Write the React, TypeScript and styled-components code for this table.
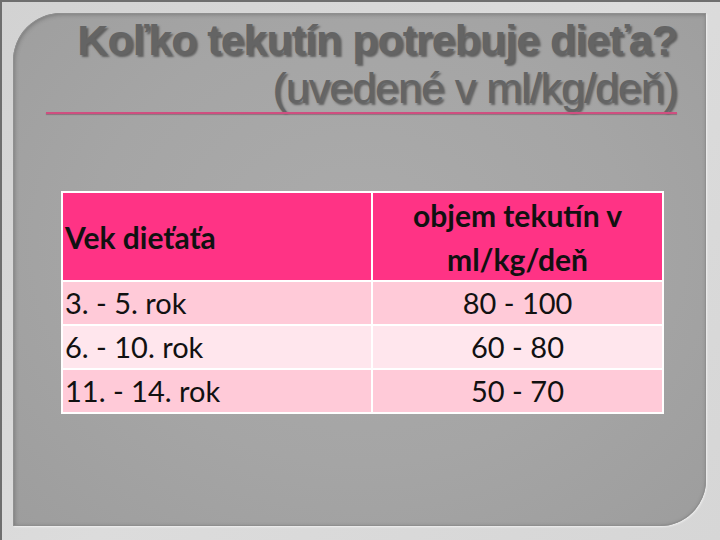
import React from "react";
import styled, { createGlobalStyle } from "styled-components";

const Global = createGlobalStyle`
  html, body { margin: 0; padding: 0; }
  body { width: 720px; height: 540px; overflow: hidden; }
`;

const Frame = styled.div`
  width: 720px;
  height: 540px;
  box-sizing: border-box;
  padding: 11px 14px 14px 11px;
  background: linear-gradient(135deg, #d2d2d2 0%, #dcdcdc 50%, #d6d6d6 100%);
  border-top: 2px solid #6e6e6e;
  border-left: 2px solid #6e6e6e;
`;

const Panel = styled.div`
  width: 100%;
  height: 100%;
  box-sizing: border-box;
  border-radius: 48px 0 46px 0;
  background: radial-gradient(ellipse at 50% 45%, #ababab 0%, #a5a5a5 55%, #9d9d9d 100%);
  box-shadow: inset 0 0 0 1px #8f8f8f, inset 1px 1px 5px rgba(0, 0, 0, 0.3),
    1px 1px 2px rgba(255, 255, 255, 0.6);
  display: flex;
  flex-direction: column;
`;

const Title = styled.h1`
  margin: 3px 0 0 0;
  padding: 0 29px 0 0;
  text-align: right;
  font-family: "Liberation Sans", Arial, sans-serif;
  font-size: 43px;
  line-height: 48px;
  letter-spacing: -1px;
  color: #646464;
  text-shadow: 2px 2px 2px rgba(50, 50, 50, 0.6);
`;

const TitleLine = styled.div<{ $bold?: boolean }>`
  font-weight: ${(p) => (p.$bold ? 700 : 400)};
`;

const Rule = styled.div`
  height: 2px;
  margin: 0 29px 0 33px;
  background: #cf4f80;
  box-shadow: 0 1px 1px rgba(80, 30, 50, 0.35);
`;

const Table = styled.div`
  margin: 77px 0 0 48px;
  width: 603px;
  box-sizing: border-box;
  display: grid;
  grid-template-columns: 308px 289px;
  grid-template-rows: 87px 42px 42px 42px;
  gap: 2px;
  padding: 2px;
  background: #ffffff;
  font-family: Lato, "Open Sans", sans-serif;
  color: #111;
`;

const Cell = styled.div<{ $tone: "head" | "odd" | "even"; $center?: boolean }>`
  background: ${(p) =>
    p.$tone === "head" ? "#ff3385" : p.$tone === "odd" ? "#ffcad8" : "#ffe6ed"};
  font-weight: ${(p) => (p.$tone === "head" ? 700 : 400)};
  font-size: ${(p) => (p.$tone === "head" ? 30 : 29)}px;
  display: flex;
  flex-direction: column;
  justify-content: center;
  align-items: ${(p) => (p.$center ? "center" : "flex-start")};
  text-align: ${(p) => (p.$center ? "center" : "left")};
  padding-left: ${(p) => (p.$center ? 0 : 2)}px;
  line-height: ${(p) => (p.$tone === "head" ? 44 : 40)}px;
  white-space: nowrap;
`;

const rows = [
  ["3. - 5. rok", "80 - 100"],
  ["6. - 10. rok", "60 - 80"],
  ["11. - 14. rok", "50 - 70"],
];

export default function App() {
  return (
    <>
      <Global />
      <Frame>
        <Panel>
          <Title>
            <TitleLine $bold>Koľko tekutín potrebuje dieťa?</TitleLine>
            <TitleLine>(uvedené v ml/kg/deň)</TitleLine>
          </Title>
          <Rule />
          <Table>
            <Cell $tone="head">Vek dieťaťa</Cell>
            <Cell $tone="head" $center>
              <span>objem tekutín v</span>
              <span>ml/kg/deň</span>
            </Cell>
            {rows.map(([a, b], i) => (
              <React.Fragment key={a}>
                <Cell $tone={i % 2 === 0 ? "odd" : "even"}>{a}</Cell>
                <Cell $tone={i % 2 === 0 ? "odd" : "even"} $center>
                  {b}
                </Cell>
              </React.Fragment>
            ))}
          </Table>
        </Panel>
      </Frame>
    </>
  );
}
